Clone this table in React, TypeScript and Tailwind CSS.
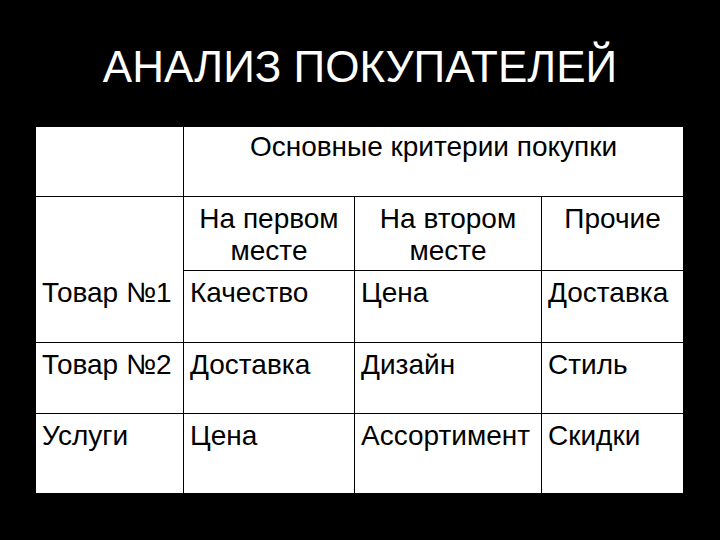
import React from "react";

// Buyer analysis slide: title + criteria table

type Cell = {
  text?: string;
  span?: number;
  center?: boolean;
  noBottom?: boolean;
  last?: boolean;
  lastRow?: boolean;
};

const ROWS: Cell[][] = [
  [{}, { text: "Основные критерии покупки", span: 3, center: true, last: true }],
  [
    { noBottom: true },
    { text: "На первом месте", center: true },
    { text: "На втором месте", center: true },
    { text: "Прочие", center: true, last: true },
  ],
  [{ text: "Товар №1" }, { text: "Качество" }, { text: "Цена" }, { text: "Доставка", last: true }],
  [{ text: "Товар №2" }, { text: "Доставка" }, { text: "Дизайн" }, { text: "Стиль", last: true }],
  [
    { text: "Услуги", lastRow: true },
    { text: "Цена", lastRow: true },
    { text: "Ассортимент", lastRow: true },
    { text: "Скидки", last: true, lastRow: true },
  ],
];

function TableCell({ cell, header }: { cell: Cell; header: boolean }) {
  return (
    <div
      className={[
        "bg-white border-black px-[6px]",
        header ? "pt-[4px]" : "pt-[6px]",
        cell.span === 3 ? "col-span-3" : "",
        cell.last ? "" : "border-r",
        cell.noBottom || cell.lastRow ? "" : "border-b",
        cell.center ? "text-center" : "text-left",
      ].join(" ")}
    >
      {cell.text}
    </div>
  );
}

export default function App() {
  return (
    <div
      className="w-[720px] h-[540px] bg-black overflow-hidden"
      style={{ fontFamily: '"Liberation Sans", Arial, sans-serif' }}
    >
      <h1 className="pt-[41px] text-center text-white text-[44px] leading-[52px]">
        АНАЛИЗ ПОКУПАТЕЛЕЙ
      </h1>
      <div className="mt-[34px] ml-[36px] w-[647px] grid grid-cols-[148px_171px_187px_141px] grid-rows-[70px_74px_72px_71px_79px] text-black text-[28px] leading-[32px]">
        {ROWS.map((row, r) =>
          row.map((cell, c) => <TableCell key={`${r}-${c}`} cell={cell} header={r === 0} />)
        )}
      </div>
    </div>
  );
}
